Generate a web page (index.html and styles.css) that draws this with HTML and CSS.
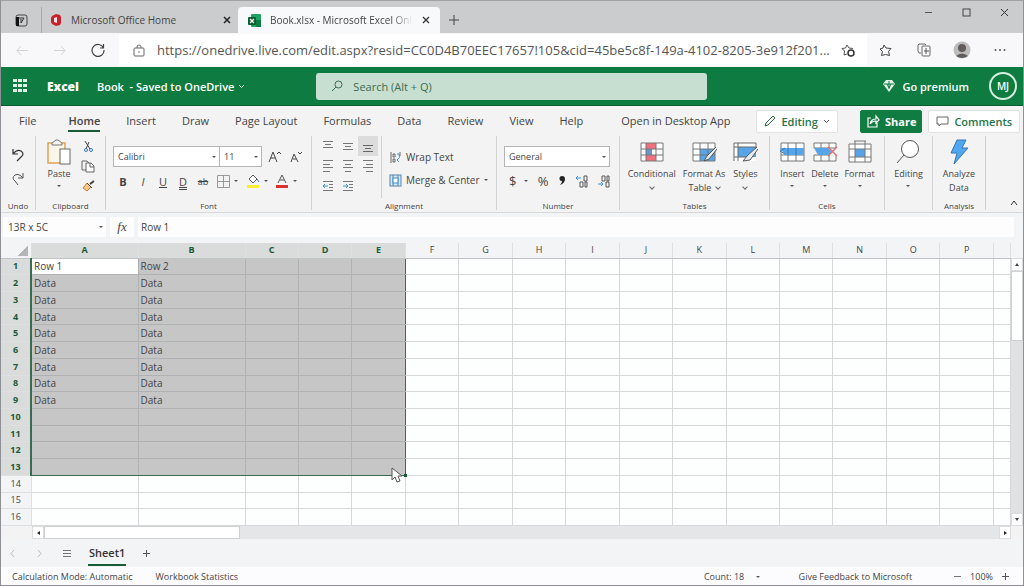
FILE: index.html
```html
<!DOCTYPE html>
<html lang="en">
<head>
    <meta charset="UTF-8">
    <meta name="viewport" content="width=device-width, initial-scale=1.0">
    <title>Book.xlsx - Microsoft Excel Online</title>
    <link rel="stylesheet" href="styles.css">
</head>
<body>
<div class="window">

    <!-- Browser tabs -->
    <div class="tab-bar">
        <button class="tab-actions" aria-label="Tab actions">
            <svg width="13" height="13" viewBox="0 0 13 13"><rect x="1" y="1" width="11" height="11" rx="2" fill="none" stroke="#444"/><rect x="1" y="3" width="3" height="9" fill="#111"/><path d="M4 4h5M9 4 6 9V5" stroke="#333" fill="none"/></svg>
        </button>
        <div class="tab">
            <svg width="12" height="14" viewBox="0 0 12 14"><path d="M6 1 10 2l1 2v6l-1 2-4 1-4-2-1-2V5l1-2z" fill="#c8202c"/><path d="M7 4v6L4 9V5z" fill="#f3e3e3"/></svg>
            <span class="tab-title">Microsoft Office Home</span>
            <button class="close" aria-label="Close tab"><svg width="8" height="8" viewBox="0 0 8 8"><path d="M1 1l6 6M7 1 1 7" stroke="#222" stroke-width="1.5"/></svg></button>
        </div>
        <div class="tab active">
            <svg width="13" height="13" viewBox="0 0 13 13"><rect x="3" width="10" height="13" rx="1" fill="#21a366"/><rect x="8" y="6" width="5" height="7" fill="#107c41"/><rect y="3" width="8" height="8" rx="1" fill="#0b5c30"/><path d="M2 5l4 4M6 5 2 9" stroke="#fff" stroke-width="1.2"/></svg>
            <span class="tab-title fade">Book.xlsx - Microsoft Excel Online</span>
            <button class="close" aria-label="Close tab"><svg width="8" height="8" viewBox="0 0 8 8"><path d="M1 1l6 6M7 1 1 7" stroke="#333" stroke-width="1.3"/></svg></button>
        </div>
        <button class="new-tab" aria-label="New tab"><svg width="12" height="12" viewBox="0 0 12 12"><path d="M6 1v10M1 6h10" stroke="#444"/></svg></button>
        <div class="window-controls">
            <button aria-label="Minimize"><svg width="9" height="9" viewBox="0 0 9 9"><path d="M1 4.500h7" stroke="#555"/></svg></button>
            <button aria-label="Maximize"><svg width="9" height="9" viewBox="0 0 9 9"><rect x="1" y="1" width="7" height="7" fill="none" stroke="#444"/></svg></button>
            <button aria-label="Close window"><svg width="9" height="9" viewBox="0 0 9 9"><path d="M1 1l7 7M8 1 1 8" stroke="#333"/></svg></button>
        </div>
    </div>

    <!-- Address bar -->
    <div class="address-bar">
        <button aria-label="Back"><svg width="12" height="11" viewBox="0 0 12 11"><path d="M12 5.500H1M5 1 1 5.500 5 10" fill="none" stroke="#d3d3d6"/></svg></button>
        <button aria-label="Forward"><svg width="12" height="11" viewBox="0 0 12 11"><path d="M0 5.500h11M7 1l4 4.500L7 10" fill="none" stroke="#d3d3d6"/></svg></button>
        <button aria-label="Refresh"><svg width="14" height="14" viewBox="0 0 14 14"><path d="M12.500 5A6 6 0 1 0 13 7M12.500 1v4H9" fill="none" stroke="#444" stroke-width="1.200"/></svg></button>
        <div class="url-box">
            <svg width="12" height="13" viewBox="0 0 12 13"><rect x="1" y="4" width="10" height="8" rx="1" fill="none" stroke="#666"/><path d="M4 4V3a2 2 0 0 1 4 0v1" fill="none" stroke="#666"/><circle cx="6" cy="8" r=".8" fill="#666"/></svg>
            <input type="text" aria-label="Address" value="https://onedrive.live.com/edit.aspx?resid=CC0D4B70EEC17657!105&amp;cid=45be5c8f-149a-4102-8205-3e912f201...">
            <button aria-label="Add to favorites"><svg width="14" height="13" viewBox="0 0 14 13"><path d="M6 1 4.500 4 1 4.500 3.500 7 3 11l3-1M6 1l2 3 4 .5" fill="none" stroke="#555"/><circle cx="10" cy="9" r="3" fill="none" stroke="#333" stroke-width="1.500"/></svg></button>
        </div>
        <div class="browser-actions">
            <button aria-label="Favorites"><svg width="14" height="13" viewBox="0 0 14 13"><path d="M5 1l2 3 5 .5L9.500 7.500l1 4-4-1-4 1 1-4L1 5l3-1z" fill="none" stroke="#444"/></svg></button>
            <button aria-label="Collections"><svg width="14" height="14" viewBox="0 0 14 14"><path d="M9 2 8 1H2L1 2v6l1 2h2" fill="none" stroke="#666"/><rect x="5" y="3" width="8" height="10" rx="1" fill="none" stroke="#666"/><path d="M9 5v6M7 8h5" stroke="#555"/></svg></button>
            <button aria-label="Profile"><svg width="18" height="18" viewBox="0 0 18 18"><circle cx="9" cy="9" r="8.500" fill="#bdbcbc"/><circle cx="9" cy="7" r="4" fill="#625d5c"/><path d="M3 15q6-5 12 0-6 4-12 0" fill="#625d5c"/></svg></button>
            <button aria-label="More"><svg width="12" height="4" viewBox="0 0 12 4"><circle cx="1.500" cy="2" r="1" fill="#555"/><circle cx="6" cy="2" r="1" fill="#555"/><circle cx="10.500" cy="2" r="1" fill="#555"/></svg></button>
        </div>
    </div>

    <!-- Excel header -->
    <header class="app-header">
        <button aria-label="App launcher"><svg width="14" height="14" viewBox="0 0 14 14" fill="#e3f3e9"><path d="M0 0h4v3H0zM5 0h4v3H5zM10 0h4v3h-4zM0 5h4v3H0zM5 5h4v3H5zM10 5h4v3h-4zM0 10h4v3H0zM5 10h4v3H5zM10 10h4v3h-4z"/></svg></button>
        <strong class="app-name">Excel</strong>
        <button class="doc-name">Book&nbsp; - Saved to OneDrive <svg width="7" height="5" viewBox="0 0 7 5"><path d="M1 1l2.500 2.500L6 1" fill="none" stroke="#d6eedf"/></svg></button>
        <label class="search">
            <svg width="12" height="12" viewBox="0 0 12 12"><circle cx="7.500" cy="4.500" r="3.500" fill="none" stroke="#3c6c50"/><path d="M5 7 1 11" stroke="#3c6c50"/></svg>
            <input type="search" placeholder="Search (Alt + Q)" aria-label="Search">
        </label>
        <button class="premium"><svg width="12" height="14" viewBox="0 0 12 14"><path d="M3 1h6l3 4-6 8-6-8z" fill="#e3f3e9"/><path d="M6 2v8M1 5h10M4 5l2 4 2-4" fill="none" stroke="#107c41"/></svg>Go premium</button>
        <button class="avatar">MJ</button>
    </header>

    <!-- Ribbon tabs -->
    <nav class="ribbon-tabs">
        <a href="#" class="file">File</a>
        <a href="#" class="current">Home</a>
        <a href="#">Insert</a>
        <a href="#">Draw</a>
        <a href="#">Page Layout</a>
        <a href="#">Formulas</a>
        <a href="#">Data</a>
        <a href="#">Review</a>
        <a href="#">View</a>
        <a href="#">Help</a>
        <a href="#" class="desktop">Open in Desktop App</a>
        <div class="pills">
            <button class="pill editing"><svg width="12" height="12" viewBox="0 0 12 12"><path d="M1 11l1-3 7-7 2 2-7 7z" fill="none" stroke="#27734a"/></svg>Editing<svg width="7" height="5" viewBox="0 0 7 5"><path d="M1 1l2.500 2.500L6 1" fill="none" stroke="#555"/></svg></button>
            <button class="pill share"><svg width="14" height="14" viewBox="0 0 14 14"><path d="M5 4H2v9h9V9M4 10q1-5 6-5V2l3 4-3 3V7Q6 7 4 10" fill="none" stroke="#fff" stroke-width="1.200"/></svg>Share</button>
            <button class="pill"><svg width="13" height="11" viewBox="0 0 13 11"><path d="M1 1h11v7H5l-2 2V8H1z" fill="none" stroke="#666"/></svg>Comments</button>
        </div>
    </nav>

    <!-- Ribbon -->
    <div class="ribbon">
        <section class="group undo">
            <div class="group-body stack">
                <button aria-label="Undo"><svg width="14" height="14" viewBox="0 0 14 14"><path d="M2 1v5h5M2 6Q6 1 10 3q4 3 0 6l-4 4" fill="none" stroke="#333" stroke-width="1.200"/></svg></button>
                <button aria-label="Redo"><svg width="14" height="14" viewBox="0 0 14 14"><path d="M12 1v5H7M12 6Q8 1 4 3q-4 3 0 6l3 4" fill="none" stroke="#555"/></svg></button>
            </div>
            <h2>Undo</h2>
        </section>
        <section class="group clipboard">
            <div class="group-body">
                <button class="big"><svg width="26" height="26" viewBox="0 0 26 26"><rect x="2" y="4" width="17" height="20" fill="#fbf6ec" stroke="#e0a252" stroke-width="1.500"/><path d="M6 6V4l4-3h2l4 3v2z" fill="#f3f3f3" stroke="#777"/><rect x="14" y="10" width="10" height="15" fill="#fff" stroke="#666"/></svg><span>Paste</span><i class="caret"></i></button>
                <div class="stack clip-icons">
                    <button aria-label="Cut"><svg width="12" height="13" viewBox="0 0 12 13"><path d="M3 1l5 8M7 2 4 9" stroke="#444" fill="none"/><circle cx="4" cy="10" r="1.500" fill="none" stroke="#3c78c0"/><circle cx="9" cy="10" r="1.500" fill="none" stroke="#3c78c0"/></svg></button>
                    <button aria-label="Copy"><svg width="14" height="13" viewBox="0 0 14 13"><path d="M5 10H1V1h5l2 2" fill="none" stroke="#666"/><path d="M5 3h5l3 3v6H5zM9 3v4h4" fill="#fff" stroke="#666"/></svg></button>
                    <button aria-label="Format Painter"><svg width="13" height="12" viewBox="0 0 13 12"><path d="M8 4l4-3" stroke="#444" stroke-width="2"/><path d="M5 3l4 4-4 4-4-3z" fill="#f7c78b" stroke="#d07b25"/><path d="M5 3l5 5" stroke="#444"/></svg></button>
                </div>
            </div>
            <h2>Clipboard</h2>
        </section>
        <section class="group font">
            <div class="group-body stack">
                <div class="row">
                    <div class="select name"><select aria-label="Font"><option>Calibri</option></select></div>
                    <div class="select size"><select aria-label="Font size"><option>11</option></select></div>
                    <button class="grow" aria-label="Increase font size"><svg width="13" height="12" viewBox="0 0 13 12"><path d="M1 11 5 1l4 10M3 7h4M9 3l2-2 2 2" fill="none" stroke="#444"/></svg></button>
                    <button aria-label="Decrease font size"><svg width="12" height="12" viewBox="0 0 12 12"><path d="M1 11 4 3l4 8M3 8h3M8 1l2 2 2-2" fill="none" stroke="#444"/></svg></button>
                </div>
                <div class="row format">
                    <button><b>B</b></button>
                    <button><em>I</em></button>
                    <button><u>U</u></button>
                    <button><u class="double">D</u></button>
                    <button><s>ab</s></button>
                    <button class="drop" aria-label="Borders"><svg width="13" height="13" viewBox="0 0 13 13"><path d="M.5 .5h12v12H.5zM6.500 1v11M1 6.500h11" fill="none" stroke="#999"/></svg><i class="caret"></i></button>
                    <button class="drop" aria-label="Fill color"><svg width="14" height="14" viewBox="0 0 14 14"><path d="M3 5l4-4 4 4-4 4z" fill="#fff" stroke="#555"/><path d="M11 5l2 3" stroke="#3c78c0"/><path d="M1 11h12v3H1z" fill="#f8ee2e"/></svg><i class="caret"></i></button>
                    <button class="drop" aria-label="Font color"><svg width="14" height="14" viewBox="0 0 14 14"><path d="M3 9l4-8 4 8M5 6h4" fill="none" stroke="#555"/><path d="M1 11h12v3H1z" fill="#dc3030"/></svg><i class="caret"></i></button>
                </div>
            </div>
            <h2>Font</h2>
        </section>
        <section class="group alignment">
            <div class="group-body">
                <div class="align-grid">
                    <button aria-label="Top Align"><svg width="12" height="12" viewBox="0 0 12 12"><path d="M1 1.500h10M3 4.500h6M1 7.500h10" stroke="#777"/></svg></button>
                    <button aria-label="Middle Align"><svg width="12" height="12" viewBox="0 0 12 12"><path d="M1 3.500h10M3 6.500h6M1 9.500h10" stroke="#777"/></svg></button>
                    <button class="on" aria-label="Bottom Align"><svg width="12" height="12" viewBox="0 0 12 12"><path d="M1 5.500h10M3 8.500h6M1 11.500h10" stroke="#666"/></svg></button>
                    <button aria-label="Align Left"><svg width="12" height="12" viewBox="0 0 12 12"><path d="M1 .5h10M1 4.500h7M1 7.500h10M1 11.500h7" stroke="#777"/></svg></button>
                    <button aria-label="Center"><svg width="12" height="12" viewBox="0 0 12 12"><path d="M1 .5h10M3 4.500h6M1 7.500h10M3 11.500h6" stroke="#777"/></svg></button>
                    <button aria-label="Align Right"><svg width="12" height="12" viewBox="0 0 12 12"><path d="M1 .5h10M4 4.500h7M1 7.500h10M4 11.500h7" stroke="#777"/></svg></button>
                    <button aria-label="Decrease Indent"><svg width="12" height="12" viewBox="0 0 12 12"><path d="M1 1.500h10M7 4.500h4M7 7.500h4M1 10.500h10" stroke="#777"/><path d="M6 6H1M3 4 1 6l2 2" fill="none" stroke="#3c8fd0"/></svg></button>
                    <button aria-label="Increase Indent"><svg width="12" height="12" viewBox="0 0 12 12"><path d="M1 1.500h10M7 4.500h4M7 7.500h4M1 10.500h10" stroke="#777"/><path d="M1 6h5M4 4l2 2-2 2" fill="none" stroke="#3c8fd0"/></svg></button>
                </div>
                <div class="stack wrap-merge">
                    <button><svg width="13" height="13" viewBox="0 0 13 13"><path d="M2 1v11M11 1v4M4 3h2v3H4zM4 8h2v3H4z" fill="none" stroke="#666"/><path d="M8 3h2q2 4-2 6M10 7 8 9l2 2" fill="none" stroke="#3c8fd0"/></svg>Wrap Text</button>
                    <button><svg width="13" height="13" viewBox="0 0 13 13"><rect x="1" y="1" width="11" height="11" fill="#d7e9f7" stroke="#5484aa"/><path d="M4 1v11M9 1v11" stroke="#5484aa"/><rect x="4" y="4" width="5" height="5" fill="#fff" stroke="#3c8fd0"/></svg>Merge &amp; Center<i class="caret"></i></button>
                </div>
            </div>
            <h2>Alignment</h2>
        </section>
        <section class="group number">
            <div class="group-body stack">
                <div class="select"><select aria-label="Number format"><option>General</option></select></div>
                <div class="row symbols">
                    <button class="drop">$<i class="caret"></i></button>
                    <button>%</button>
                    <button aria-label="Comma style"><svg width="8" height="12" viewBox="0 0 8 12"><path d="M4 1a2.500 2.500 0 0 0 0 5q0 2-2 4 5-2 5-6a3 3 0 0 0-3-3" fill="#222"/></svg></button>
                    <button aria-label="Increase Decimal"><svg width="13" height="13" viewBox="0 0 13 13"><path d="M6 3H1M3 1 1 3l2 2" fill="none" stroke="#3c8fd0"/><path d="M9 1h3v5H9zM5 7h3v5H5zM10 7h2v5h-2z" fill="none" stroke="#555"/></svg></button>
                    <button aria-label="Decrease Decimal"><svg width="13" height="13" viewBox="0 0 13 13"><path d="M1 9h5M4 7l2 2-2 2" fill="none" stroke="#3c8fd0"/><path d="M9 7h3v5H9zM5 1h3v5H5zM10 1h2v5h-2z" fill="none" stroke="#555"/></svg></button>
                </div>
            </div>
            <h2>Number</h2>
        </section>
        <section class="group tables">
            <div class="group-body">
                <button class="big"><svg width="26" height="22" viewBox="0 0 26 22"><rect x="2" y="2" width="22" height="18" fill="#fff"/><path d="M7 2h10v6H7zM7 14h10v6H7z" fill="#ef7180"/><path d="M7 8h6v6H7z" fill="#6f8fd8"/><path d="M2 2h22v18H2zM7 2v18M17 2v18M2 8h22M2 14h22" fill="none" stroke="#777"/></svg><span>Conditional</span><i class="chev"></i></button>
                <button class="big"><svg width="26" height="22" viewBox="0 0 26 22"><path d="M2 2h22v18H2z" fill="#fff"/><path d="M9 8h15v12H9z" fill="#55a5e8"/><path d="M2 2h22v18H2zM9 2v18M17 2v18M2 8h22M2 14h22" fill="none" stroke="#777"/><path d="M25 6 16 15l-3 5 5-2 8-10" fill="#e8eef4" stroke="#555"/></svg><span>Format As<br>Table <i class="chev inline"></i></span></button>
                <button class="big"><svg width="26" height="22" viewBox="0 0 26 22"><path d="M2 2h22v18H2z" fill="#fff"/><path d="M6 6h18v10H6z" fill="#55a5e8"/><path d="M2 20V2h22v5M6 2v18M2 6h22M2 16h12" fill="none" stroke="#666"/><path d="M25 6 16 14l-5 6 7-1 8-11" fill="#e8eef4" stroke="#555"/></svg><span>Styles</span><i class="chev"></i></button>
            </div>
            <h2>Tables</h2>
        </section>
        <section class="group cells">
            <div class="group-body">
                <button class="big"><svg width="26" height="22" viewBox="0 0 26 22"><path d="M2 2h23v18H2z" fill="#fff" stroke="#777"/><path d="M9 2v18M17 2v18M2 14h23" stroke="#777"/><path d="M1 7h24v7H6z" fill="#55a5e8"/><path d="M9 7v7M17 7v7M6 7l-5 3 5 3" fill="none" stroke="#3879b5"/></svg><span>Insert</span><i class="caret"></i></button>
                <button class="big"><svg width="26" height="22" viewBox="0 0 26 22"><path d="M2 2h22v5H2zM2 14h15v6H2zM9 2v5M17 2v5M9 14v6M24 14v6h-7" fill="#fff" stroke="#777"/><path d="M2 7h14l4 4-4 3H6z" fill="#55a5e8"/><path d="M16 6l9 9M25 6l-9 9" stroke="#e06a6a" stroke-width="1.200"/></svg><span>Delete</span><i class="caret"></i></button>
                <button class="big"><svg width="26" height="24" viewBox="0 0 26 24"><path d="M2 4h22v18H2z" fill="#fff"/><path d="M8 9h10v8H8z" fill="#55a5e8"/><path d="M2 4h22v18H2zM8 1v21M18 1v21M2 9h22M2 17h22M7 1h12" fill="none" stroke="#777"/></svg><span>Format</span><i class="caret"></i></button>
            </div>
            <h2>Cells</h2>
        </section>
        <section class="group edit">
            <div class="group-body">
                <button class="big"><svg width="26" height="26" viewBox="0 0 26 26"><circle cx="15" cy="10" r="8.500" fill="#fff" stroke="#555"/><path d="M9 16 2 24" stroke="#555"/></svg><span>Editing</span><i class="caret"></i></button>
            </div>
        </section>
        <section class="group analysis">
            <div class="group-body">
                <button class="big"><svg width="26" height="26" viewBox="0 0 26 26"><path d="M11 1h9l-4 8h6L8 25l3-11H5z" fill="#50a6ef" stroke="#3477b5"/></svg><span>Analyze<br>Data</span></button>
            </div>
            <h2>Analysis</h2>
        </section>
        <button class="collapse" aria-label="Collapse ribbon"><svg width="8" height="6" viewBox="0 0 8 6"><path d="M1 5l3-4 3 4" fill="none" stroke="#333"/></svg></button>
    </div>

    <!-- Formula bar -->
    <div class="formula-bar">
        <div class="name-box"><input type="text" aria-label="Name box" value="13R x 5C"><i class="caret"></i></div>
        <button class="fx"><em>fx</em></button>
        <input class="formula" type="text" aria-label="Formula" value="Row 1">
    </div>

    <!-- Worksheet -->
    <div class="sheet-area">
        <div class="sheet-wrap">
            <table class="sheet">
                <colgroup id="cols"></colgroup>
                <thead><tr id="head"></tr></thead>
                <tbody id="body"></tbody>
            </table>
        </div>
        <div class="v-scroll">
            <button aria-label="Scroll up"><i class="arrow up"></i></button>
            <div class="v-thumb"></div>
            <button class="end" aria-label="Scroll down"><i class="arrow down"></i></button>
        </div>
    </div>
    <div class="h-scroll">
        <button aria-label="Scroll left"><i class="arrow left"></i></button>
        <div class="h-thumb"></div>
        <button class="end" aria-label="Scroll right"><i class="arrow right"></i></button>
    </div>

    <!-- Sheet tabs -->
    <div class="sheet-tabs">
        <button aria-label="Previous sheet"><svg width="6" height="9" viewBox="0 0 6 9"><path d="M4 1 1 4.500 4 8" fill="none" stroke="#bbb"/></svg></button>
        <button aria-label="Next sheet"><svg width="6" height="9" viewBox="0 0 6 9"><path d="M2 1l3 3.500L2 8" fill="none" stroke="#bbb"/></svg></button>
        <button aria-label="All sheets"><svg width="10" height="9" viewBox="0 0 10 9"><path d="M1 1.500h8M1 4.500h8M1 7.500h8" stroke="#777"/></svg></button>
        <button class="sheet-tab">Sheet1</button>
        <button aria-label="Add sheet"><svg width="9" height="9" viewBox="0 0 9 9"><path d="M4.500 1v7M1 4.500h7" stroke="#555"/></svg></button>
    </div>

    <!-- Status bar -->
    <footer class="status-bar">
        <span>Calculation Mode: Automatic</span>
        <span>Workbook Statistics</span>
        <span class="count">Count: 18 <i class="caret"></i></span>
        <a href="#">Give Feedback to Microsoft</a>
        <div class="zoom">
            <button aria-label="Zoom out"><svg width="9" height="9" viewBox="0 0 9 9"><path d="M1 4.500h7" stroke="#777"/></svg></button>
            <span>100%</span>
            <button aria-label="Zoom in"><svg width="9" height="9" viewBox="0 0 9 9"><path d="M4.500 1v7M1 4.500h7" stroke="#555"/></svg></button>
        </div>
    </footer>
</div>

<script src="script.js"></script>
</body>
</html>
```
FILE: styles.css
```css
/* Reset & Global Styles */
* {
    margin: 0;
    padding: 0;
    box-sizing: border-box;
}

body {
    font-family: 'Open Sans', sans-serif;
    font-size: 10px;
    color: #444;
    background: #f3f3f4;
}

button, input, select {
    font: inherit;
    color: inherit;
    background: none;
    border: none;
    outline: none;
}

button {
    display: flex;
    align-items: center;
    justify-content: center;
    white-space: nowrap;
}

svg {
    flex: none;
    display: block;
}

a {
    color: inherit;
    text-decoration: none;
}

.window {
    height: 100vh;
    display: flex;
    flex-direction: column;
    border: 1px solid #8f8f96;
    border-top-color: #a2a2a2;
    overflow: hidden;
}

.window > * {
    flex: none;
}

.row {
    display: flex;
    align-items: center;
}

.stack {
    display: flex;
    flex-direction: column;
}

/* Small drop-down markers */
.caret {
    display: inline-block;
    border: 2px solid transparent;
    border-top-color: #555;
    border-bottom: none;
}

.chev {
    display: inline-block;
    width: 4px;
    height: 4px;
    border: solid #666;
    border-width: 0 1px 1px 0;
    transform: rotate(45deg);
}

.chev.inline {
    margin: 0 0 2px 2px;
}

/* Browser Tabs */
.tab-bar {
    height: 32px;
    display: flex;
    align-items: flex-end;
    background: #cbcccd;
}

.tab-bar > button {
    height: 26px;
}

.tab-actions {
    width: 40px;
}

.tab {
    width: 197px;
    height: 26px;
    display: flex;
    align-items: center;
    gap: 9px;
    padding: 0 7px 0 8px;
}

.tab:not(.active) {
    border-left: 1px solid #aaa;
}

.tab.active {
    width: 202px;
    background: #f8f9fb;
    border-radius: 4px 4px 0 0;
    padding: 0 10px;
}

.tab-title {
    flex: 1;
    overflow: hidden;
    white-space: nowrap;
}

.fade {
    mask-image: linear-gradient(to right, #000 85%, transparent);
}

.new-tab {
    width: 28px;
}

.window-controls {
    align-self: flex-start;
    margin-left: auto;
    display: flex;
}

.window-controls button {
    width: 38px;
    height: 23px;
}

/* Address Bar */
.address-bar {
    height: 34px;
    display: flex;
    align-items: center;
    background: #f8f8fb;
    padding: 0 4px 0 2px;
}

.address-bar > button {
    width: 38px;
    height: 28px;
}

.url-box {
    flex: 1;
    height: 32px;
    display: flex;
    align-items: center;
    gap: 12px;
    padding: 0 12px 0 14px;
    margin-left: 2px;
    background: #fff;
}

.url-box input {
    flex: 1;
    min-width: 0;
    font-size: 13px;
    color: #555;
}

.url-box button {
    margin-left: -10px;
}

.browser-actions {
    display: flex;
}

.browser-actions button {
    width: 38px;
    height: 28px;
}

/* Excel Header */
.app-header {
    height: 39px;
    display: flex;
    align-items: center;
    padding: 0 6px 0 12px;
    background: #0e7b40;
    border-bottom: 1px solid #0b5c30;
    color: #fff;
    font-size: 11px;
    font-weight: 600;
}

.app-name {
    margin-left: 20px;
    font-size: 12px;
}

.doc-name {
    gap: 4px;
    margin-left: 18px;
}

.search {
    flex: 1;
    max-width: 391px;
    height: 27px;
    display: flex;
    align-items: center;
    gap: 10px;
    margin-left: 71px;
    padding: 0 15px;
    border-radius: 3px;
    background: #c7dfd0;
    font-weight: 400;
}

.search input {
    flex: 1;
}

.search input::placeholder {
    color: #3c6c50;
}

.premium {
    gap: 7px;
    margin-left: auto;
    font-weight: 600;
}

.avatar {
    width: 28px;
    height: 28px;
    margin-left: 20px;
    border: 2px solid #d6eedf;
    border-radius: 50%;
    font-size: 10px;
}

/* Ribbon Tabs */
.ribbon-tabs {
    height: 30px;
    display: flex;
    align-items: center;
    gap: 26px;
    padding: 0 6px 0 18px;
    background: #f3f3f3;
    font-size: 11px;
    white-space: nowrap;
}

.ribbon-tabs a {
    padding: 2px 0;
    border-bottom: 2px solid transparent;
}

.ribbon-tabs .file {
    margin-right: 6px;
}

.ribbon-tabs .current {
    font-weight: 600;
    border-bottom-color: #185c37;
}

.ribbon-tabs .desktop {
    margin-left: 12px;
}

.pills {
    display: flex;
    gap: 6px;
    margin-left: auto;
}

.pill {
    height: 23px;
    gap: 5px;
    padding: 0 7px;
    border: 1px solid #e1e1e1;
    border-radius: 2px;
    background: #fff;
    color: #27734a;
    font-weight: 600;
}

.editing {
    margin-right: 16px;
}

.share {
    padding: 0 5px;
    background: #107c41;
    border-color: #107c41;
    color: #fff;
    font-weight: 700;
}

/* Ribbon */
.ribbon {
    display: flex;
    padding-bottom: 2px;
    background: #f3f3f3;
    border-bottom: 1px solid #d8d8d9;
}

.group {
    height: 74px;
    display: flex;
    flex-direction: column;
    justify-content: space-between;
    border-right: 1px solid #d2d2d4;
}

.group-body {
    height: 62px;
    display: flex;
    justify-content: center;
}

.group-body.stack {
    justify-content: flex-start;
}

.group h2 {
    font-size: 8px;
    line-height: 8px;
    font-weight: 400;
    text-align: center;
}

.undo { width: 35px; }
.clipboard { width: 70px; }
.font { width: 206px; }
.alignment { width: 185px; }
.number { width: 123px; }
.tables { width: 150px; }
.cells { width: 115px; }
.edit { width: 48px; }
.analysis { width: 53px; }

.undo .group-body {
    align-items: center;
    gap: 10px;
    padding-top: 12px;
}

.big {
    flex-direction: column;
    justify-content: flex-start;
    font-size: 9px;
    line-height: 14px;
}

.big svg {
    height: 26px;
    margin: 3px 0 2px;
}

.big > .caret,
.big > .chev {
    margin-top: 4px;
}

.clip-icons {
    gap: 7px;
    padding: 4px 0 0 9px;
}

.select {
    position: relative;
    height: 21px;
    border: 1px solid #b5b5b8;
    background: #fff;
}

.select select {
    width: 100%;
    height: 100%;
    padding-left: 4px;
    appearance: none;
    font-size: 9px;
}

.select::after {
    content: '';
    position: absolute;
    right: 3px;
    top: 9px;
    border: 2px solid transparent;
    border-top-color: #555;
    border-bottom: none;
}

.font .group-body,
.number .group-body {
    gap: 5px;
    padding: 10px 9px 0 7px;
}

.select.name {
    width: 107px;
}

.select.size {
    width: 43px;
    margin-left: -1px;
}

.grow {
    margin: 0 9px 0 6px;
}

.format button {
    width: 20px;
    height: 18px;
    font-size: 11px;
}

.format .drop {
    width: 29px;
    gap: 4px;
}

.format s {
    font-size: 9px;
}

.double {
    text-decoration-style: double;
}

.alignment .group-body {
    justify-content: flex-start;
}

.align-grid {
    display: grid;
    grid-template-columns: 20px 20px 20px;
    grid-auto-rows: 20px;
    padding: 0 3px 0 6px;
    border-right: 1px solid #d2d2d4;
}

.align-grid .on {
    background: #dcdcdd;
}

.wrap-merge {
    gap: 7px;
    padding: 13px 0 0 7px;
}

.wrap-merge button {
    justify-content: flex-start;
    gap: 4px;
    height: 16px;
}

.symbols {
    justify-content: space-between;
    padding: 0 0 0 5px;
}

.symbols button {
    height: 18px;
    font-size: 13px;
}

.symbols .drop {
    gap: 8px;
}

.tables .group-body {
    gap: 7px;
    padding-right: 3px;
}

.cells .group-body {
    gap: 6px;
}

.collapse {
    align-self: flex-end;
    margin-left: auto;
    padding: 4px 5px;
}

/* Formula Bar */
.formula-bar {
    height: 30px;
    display: flex;
    gap: 4px;
    padding: 4px 9px 6px 2px;
    background: #f3f4f6;
}

.formula-bar > * {
    background: #fdfdfe;
}

.name-box {
    width: 103px;
    display: flex;
    align-items: center;
    padding: 0 3px 0 5px;
}

.name-box input {
    flex: 1;
    min-width: 0;
}

.fx {
    width: 24px;
    font-family: 'Liberation Serif', serif;
    font-size: 13px;
}

.formula {
    flex: 1;
    padding-left: 3px;
}

/* Worksheet */
.window > .sheet-area {
    flex: 1;
    min-height: 0;
    display: flex;
}

.sheet-wrap {
    flex: 1;
    min-width: 0;
}

.sheet {
    width: 100%;
    height: 100%;
    border-collapse: collapse;
    table-layout: fixed;
    background: #fdfefe;
}

.sheet .col-index { width: 30px; }
.sheet .col-wide { width: 107px; }
.sheet .col-rest { width: 17px; }

.sheet th {
    font-weight: 400;
    font-size: 9px;
    line-height: 12px;
    background: #f3f4f6;
    border: 1px solid #dddfe1;
}

.sheet tbody tr {
    height: 16px;
}

.sheet thead th {
    height: 15px;
    border-top: none;
    border-bottom-color: #c2c4c6;
}

.sheet thead th:first-child {
    background: linear-gradient(135deg, transparent 50%, #b4b5b6 50%) right 3px bottom 2px / 10px 10px no-repeat #f3f4f6;
    border-left: none;
}

.sheet tbody th {
    border-left: none;
}

.sheet th.selected {
    background: #dadbdb;
    color: #185c37;
    font-weight: 700;
}

.sheet td {
    padding: 0 0 0 2px;
    line-height: 12px;
    border: 1px solid #d6d8da;
    white-space: nowrap;
}

.sheet td.selected {
    background: #c6c6c7;
    border-color: #b0b1b2;
}

.sheet td.active {
    background: #fff;
}

.sheet td.edge-left { border-left: 2px solid #376c50; }
.sheet td.edge-top { border-top: 1px solid #376c50; }
.sheet td.edge-right { border-right: 1px solid #376c50; }
.sheet td.edge-bottom { border-bottom: 1px solid #376c50; }

.corner {
    position: relative;
}

.handle {
    position: absolute;
    right: -2px;
    bottom: -2px;
    width: 3px;
    height: 3px;
    background: #185c37;
}

.cursor {
    position: absolute;
    right: 2px;
    top: 8px;
    z-index: 1;
}

/* Scrollbars */
.v-scroll {
    width: 12px;
    display: flex;
    flex-direction: column;
    background: #dfe1e3;
    border-top: 15px solid #f3f4f6;
}

.v-scroll button,
.h-scroll button {
    width: 12px;
    height: 13px;
    background: #fff;
    border: 1px solid #dcdcdf;
}

.v-thumb {
    height: 70px;
    background: #fff;
    border: 1px solid #cfd0d2;
}

.v-scroll .end {
    margin-top: auto;
}

.h-scroll {
    display: flex;
    margin: 0 12px 0 31px;
    background: #e5e6e8;
}

.h-thumb {
    width: 20%;
    background: #fff;
    border: 1px solid #cfd0d2;
}

.h-scroll .end {
    margin-left: auto;
}

.arrow {
    border: 2px solid transparent;
}

.up { border-top: none; border-bottom: 3px solid #444; }
.down { border-bottom: none; border-top: 3px solid #444; }
.left { border-left: none; border-right: 3px solid #222; }
.right { border-right: none; border-left: 3px solid #222; }

/* Sheet Tabs */
.sheet-tabs {
    height: 28px;
    display: flex;
    align-items: center;
    gap: 20px;
    padding-left: 9px;
    background: #f3f4f6;
}

.sheet-tab {
    height: 25px;
    margin: 0 -4px;
    padding: 0 1px;
    border-bottom: 2px solid #185c37;
    font-size: 11px;
    font-weight: 600;
    color: #333;
}

/* Status Bar */
.status-bar {
    height: 18px;
    display: flex;
    align-items: center;
    gap: 23px;
    padding: 0 13px 0 11px;
    background: #fcfcfe;
    font-size: 9px;
}

.count {
    margin-left: auto;
}

.count .caret {
    margin: 0 16px 2px 9px;
}

.zoom {
    display: flex;
    align-items: center;
    gap: 8px;
    margin-left: 18px;
}
```
FILE: script.js
```js
const letters = 'ABCDEFGHIJKLMNOP'.split('');
const ROWS = 16;
const SEL_COLS = 5;
const SEL_ROWS = 13;

const cols = document.getElementById('cols');
const head = document.getElementById('head');
const body = document.getElementById('body');

cols.innerHTML = '<col class="col-index"><col class="col-wide"><col class="col-wide">'
    + '<col>'.repeat(letters.length - 2) + '<col class="col-rest">';

head.innerHTML = '<th></th>' + letters.map((l, i) =>
    `<th scope="col"${i < SEL_COLS ? ' class="selected"' : ''}>${l}</th>`).join('') + '<th></th>';

function cellText(r, c) {
    if (c > 2 || r > 9) return '';
    return r === 1 ? 'Row ' + c : 'Data';
}

// fill handle and mouse pointer in the last selected cell
const cursor = '<span class="handle"></span><svg class="cursor" width="12" height="16" viewBox="0 0 12 16">'
    + '<path d="M1 1v12l3-3 2 5 3-1-2-5h4z" fill="#fff" stroke="#555"/></svg>';

for (let r = 1; r <= ROWS; r++) {
    const tr = document.createElement('tr');
    let html = `<th scope="row"${r <= SEL_ROWS ? ' class="selected"' : ''}>${r}</th>`;
    for (let c = 1; c <= letters.length + 1; c++) {
        const cls = [];
        if (r <= SEL_ROWS && c <= SEL_COLS) {
            cls.push('selected');
            if (r === 1 && c === 1) cls.push('active');
            if (c === 1) cls.push('edge-left');
            if (r === 1) cls.push('edge-top');
            if (c === SEL_COLS) cls.push('edge-right');
            if (r === SEL_ROWS) cls.push('edge-bottom');
        }
        const last = r === SEL_ROWS && c === SEL_COLS;
        if (last) cls.push('corner');
        html += `<td class="${cls.join(' ')}">${last ? cursor : cellText(r, c)}</td>`;
    }
    tr.innerHTML = html;
    body.appendChild(tr);
}
```
